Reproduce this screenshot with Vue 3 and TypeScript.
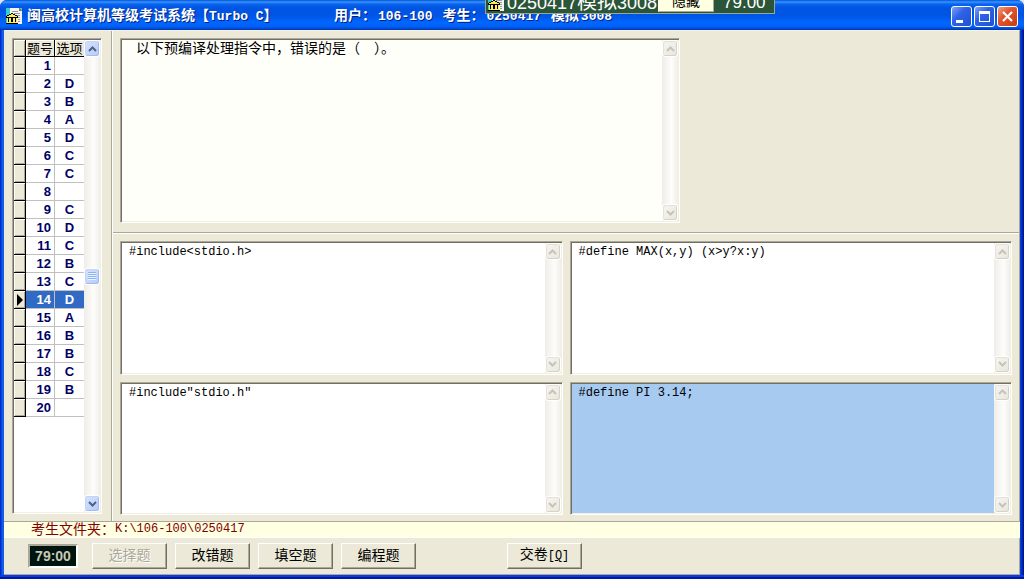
<script setup lang="ts">
import { ref } from 'vue'

interface Row { no: number; choice: string }

const choices = ['', 'D', 'B', 'A', 'D', 'C', 'C', '', 'C', 'D', 'C', 'B', 'C', 'D', 'A', 'B', 'B', 'C', 'B', '']
const rows = ref<Row[]>(choices.map((choice, i) => ({ no: i + 1, choice })))
const current = ref(14)

const question = '以下预编译处理指令中，错误的是（　）。'
const options = [
  { key: 'A', text: '#include<stdio.h>' },
  { key: 'B', text: '#define MAX(x,y) (x>y?x:y)' },
  { key: 'C', text: '#include"stdio.h"' },
  { key: 'D', text: '#define PI 3.14;' },
]
const sections = [
  { label: '选择题', disabled: true },
  { label: '改错题', disabled: false },
  { label: '填空题', disabled: false },
  { label: '编程题', disabled: false },
]
</script>

<template>
  <div class="window">
    <header class="titlebar">
      <svg class="app-icon" width="16" height="16" viewBox="0 0 16 16" shape-rendering="crispEdges">
        <rect width="16" height="16" fill="#30d0d0" />
        <path d="M4 0h9l3 3v13H4z" fill="#f4f4f4" />
        <path d="M13 0v3h3v-1h-1v-1h-1v-1z" fill="#777" />
        <path d="M6 3h6v1H6zM8 5h6v1H8zM10 7h4v1h-4zM12 9h2v1h-2zM12 11h2v1h-2zM12 13h2v1h-2z" fill="#999" />
        <path d="M5 5h2v1h2v1h2v1h1v2H0V8h1V7h2V6h2z" fill="#000" />
        <path d="M5 6h2v1h2v1h2v1H1V8h2V7h2z" fill="#fff050" />
        <path d="M1 10h10v5H1z" fill="#fff050" />
        <path d="M2 10h1v4H2zM5 10h2v4H5zM9 10h1v4H9zM0 15h12v1H0z" fill="#000" />
      </svg>
      <h1 class="title">
        <span>闽高校计算机等级考试系统【</span><span class="mono">Turbo C</span><span>】</span>
      </h1>
      <p class="user">
        <span>用户：</span><span class="mono">106-100&nbsp;</span><span>考生：</span><span class="mono">0250417&nbsp;</span><span>模拟</span><span class="mono">3008</span>
      </p>
      <div class="window-buttons">
        <button type="button" aria-label="最小化">
          <svg width="19" height="19" viewBox="0 0 19 19"><path d="M4 13h7v3H4z" fill="#fff" /></svg>
        </button>
        <button type="button" aria-label="最大化">
          <svg width="19" height="19" viewBox="0 0 19 19" shape-rendering="crispEdges"><path d="M4 4h11v11H4zM5 7v7h9V7z" fill="#fff" fill-rule="evenodd" /></svg>
        </button>
        <button type="button" class="close" aria-label="关闭">
          <svg width="19" height="19" viewBox="0 0 19 19"><path d="M5 5l9 9M14 5l-9 9" stroke="#fff" stroke-width="2.200" /></svg>
        </button>
      </div>
    </header>

    <main class="body">
      <aside class="side">
        <div class="sunken list">
          <div class="list-view">
            <table>
              <thead>
                <tr><th class="mark"></th><th>题号</th><th>选项</th></tr>
              </thead>
              <tbody>
                <tr v-for="r in rows" :key="r.no" :class="{ selected: r.no === current }" @click="current = r.no">
                  <td class="mark">
                    <svg v-if="r.no === current" width="6" height="12" viewBox="0 0 6 12"><path d="M0 0l6 6-6 6z" fill="#000" /></svg>
                  </td>
                  <td class="no">{{ r.no }}</td>
                  <td class="choice">{{ r.choice }}</td>
                </tr>
              </tbody>
            </table>
          </div>
          <div class="scrollbar active">
            <button type="button" aria-label="向上"><svg width="9" height="6" viewBox="0 0 9 6"><path d="M1 5l3.500-3.500L8 5" /></svg></button>
            <span class="thumb"></span>
            <button type="button" aria-label="向下"><svg width="9" height="6" viewBox="0 0 9 6"><path d="M1 1l3.500 3.500L8 1" /></svg></button>
          </div>
        </div>
      </aside>

      <div class="work">
        <section class="question">
          <div class="sunken memo ivory">
            <textarea class="prompt" readonly aria-label="题目" :value="question"></textarea>
            <div class="scrollbar">
              <button type="button" disabled aria-label="向上"><svg width="9" height="6" viewBox="0 0 9 6"><path d="M1 5l3.500-3.500L8 5" /></svg></button>
              <button type="button" disabled aria-label="向下"><svg width="9" height="6" viewBox="0 0 9 6"><path d="M1 1l3.500 3.500L8 1" /></svg></button>
            </div>
          </div>
        </section>
        <section class="answers">
          <div v-for="o in options" :key="o.key" class="sunken memo" :class="{ chosen: o.key === 'D' }">
            <textarea readonly :aria-label="'选项' + o.key" :value="o.text"></textarea>
            <div class="scrollbar">
              <button type="button" disabled aria-label="向上"><svg width="9" height="6" viewBox="0 0 9 6"><path d="M1 5l3.500-3.500L8 5" /></svg></button>
              <button type="button" disabled aria-label="向下"><svg width="9" height="6" viewBox="0 0 9 6"><path d="M1 1l3.500 3.500L8 1" /></svg></button>
            </div>
          </div>
        </section>
      </div>
    </main>

    <div class="path"><span>考生文件夹：</span><span class="mono">K:\106-100\0250417</span></div>

    <footer class="toolbar">
      <output class="timer">79:00</output>
      <button v-for="s in sections" :key="s.label" type="button" class="push" :disabled="s.disabled">{{ s.label }}</button>
      <button type="button" class="push submit">交卷<span class="mono">[<u>Q</u>]</span></button>
    </footer>

    <div class="float-bar">
      <svg class="float-icon" width="16" height="12" viewBox="0 4 16 12" shape-rendering="crispEdges">
        <rect y="4" width="16" height="12" fill="#30d0d0" />
        <path d="M4 4h12v12H4z" fill="#f4f4f4" />
        <path d="M8 5h6v1H8zM10 7h4v1h-4zM12 9h2v1h-2zM12 11h2v1h-2zM12 13h2v1h-2z" fill="#999" />
        <path d="M5 5h2v1h2v1h2v1h1v2H0V8h1V7h2V6h2z" fill="#000" />
        <path d="M5 6h2v1h2v1h2v1H1V8h2V7h2z" fill="#fff050" />
        <path d="M1 10h10v5H1z" fill="#fff050" />
        <path d="M2 10h1v4H2zM5 10h2v4H5zM9 10h1v4H9zM0 15h12v1H0z" fill="#000" />
      </svg>
      <span class="float-name">0250417<span class="han">模拟</span>3008</span>
      <button type="button">隐藏</button>
      <span class="float-time">79.00</span>
    </div>
  </div>
</template>

<style>
html,
body {
  margin: 0;
  background: #dfe6f4;
}
</style>

<style scoped>
* {
  box-sizing: border-box;
}

.window {
  position: relative;
  display: flex;
  flex-direction: column;
  min-height: 100vh;
  padding: 0 4px 4px;
  overflow: hidden;
  border-radius: 7px 7px 0 0;
  background: linear-gradient(90deg, #0019cf 0, #0855dd 2px, #166aee 3px, #0855dd 4px, #0855dd 50%, #0048d8 calc(100% - 4px), #003cd8 calc(100% - 3px), #0019a0 calc(100% - 1px), #00138c);
  box-shadow: inset 0 -2px #001a9c, inset 0 -4px #0c3ade;
  color: #000;
  font: 14px/16px "Liberation Sans", "Noto Sans CJK SC", sans-serif;
}

button {
  margin: 0;
  padding: 0;
  font: inherit;
}

.mono {
  font-family: "Liberation Mono", monospace;
  font-size: 12px;
}

.titlebar {
  display: flex;
  align-items: center;
  height: 30px;
  margin: 0 -4px;
  padding: 3px 6px 0;
  border-bottom: 1px solid #0138b8;
  background: linear-gradient(#0054d8 0, #3a93ff 2px, #0a66ee 4px, #0054e3 8px, #0055e5 16px, #0066ff 22px, #0064fb 26px, #0048cf 29px);
  color: #fff;
  font-weight: bold;
  text-shadow: 1px 1px #00207c;
}

.app-icon {
  flex: none;
}

.title,
.user {
  display: flex;
  align-items: baseline;
  flex: none;
  margin: 0;
  font-size: 14px;
  line-height: 20px;
  white-space: nowrap;
}

.title {
  width: 307px;
  margin-left: 5px;
}

.user {
  gap: 2px;
}

.titlebar .mono {
  font-size: 13px;
}

.window-buttons {
  display: flex;
  gap: 2px;
  margin-left: auto;
}

.window-buttons button {
  width: 21px;
  height: 21px;
  border: 1px solid #fff;
  border-radius: 3px;
  background: linear-gradient(135deg, #7fa2f6, #2e63e8 40%, #2050d0);
}

.window-buttons svg {
  display: block;
}

.window-buttons .close {
  background: linear-gradient(135deg, #f0a088, #e2552c 40%, #c83c10);
}

.body {
  display: flex;
  flex: 1;
  border-top: 1px solid #f6f4ea;
  border-right: 1px solid #aca899;
  background: #ece9d8;
}

.side {
  display: flex;
  flex: none;
  padding: 7px 9px 7px 8px;
  border-right: 1px solid #aca899;
}

.sunken {
  display: flex;
  border: 1px solid;
  border-color: #aca899 #fff #fff #aca899;
  background: #fff;
  box-shadow: inset 1px 1px #716f64, inset -1px -1px #f1efe2;
  padding: 1px;
}

.list-view {
  width: 70px;
}

table {
  width: 100%;
  border-collapse: separate;
  border-spacing: 0;
  table-layout: fixed;
}

th,
td {
  height: 18px;
  padding: 0;
  border-right: 1px solid #c0c0c0;
  border-bottom: 1px solid #c0c0c0;
  line-height: 16px;
}

th {
  height: 17px;
  border-color: #000;
  background: #ece9d8;
  font-size: 13px;
  font-weight: normal;
  line-height: 15px;
  box-shadow: inset 1px 1px #fff;
}

th:last-child,
td:last-child {
  border-right: 0;
}

.mark {
  width: 12px;
  border-color: #000;
  background: #ece9d8;
  box-shadow: inset 1px 1px #fff, inset -1px -1px #aca899;
}

.mark svg {
  display: block;
  margin: auto;
}

.no,
.choice {
  color: #000066;
  font-size: 13px;
  font-weight: bold;
}

.no {
  padding-right: 3px;
  text-align: right;
}

.choice {
  text-align: center;
}

.selected .no,
.selected .choice {
  background: #316ac5;
  color: #fff;
}

.scrollbar {
  display: flex;
  flex: none;
  flex-direction: column;
  justify-content: space-between;
  width: 16px;
  background: linear-gradient(90deg, #efede8, #fdfdfb 60%, #f0eee8);
}

.scrollbar button,
.thumb {
  display: flex;
  align-items: center;
  justify-content: center;
  width: 16px;
  height: 17px;
  border: 1px solid #fff;
  border-radius: 3px;
  background: linear-gradient(135deg, #f6f5f0, #e9e7dc);
  box-shadow: inset -1px -1px #d5d3c8, inset 1px 1px #e4e2d8;
}

.scrollbar path {
  fill: none;
  stroke: #c6c4ba;
  stroke-width: 2;
}

.active button,
.thumb {
  background: linear-gradient(135deg, #d6e2fe, #b8cbf8);
  box-shadow: inset -1px -1px #a4bbee, inset 1px 1px #c4d4fb;
}

.active path {
  stroke: #4d6185;
}

.thumb::before {
  width: 8px;
  height: 8px;
  background: repeating-linear-gradient(#8cb0f8 0 1px, #eef4fe 1px 2px);
  content: "";
}

.work {
  display: flex;
  flex: 1;
  flex-direction: column;
  min-width: 0;
  border-left: 1px solid #fff;
}

.question {
  display: flex;
  height: 202px;
  padding: 7px 7px 9px;
  border-bottom: 1px solid #aca899;
}

.question .memo {
  width: 560px;
}

.answers {
  display: grid;
  flex: 1;
  grid-template-columns: 1fr 1fr;
  grid-template-rows: 1fr 1fr;
  gap: 7px;
  padding: 7px 7px 6px;
  border-top: 1px solid #fff;
}

.memo {
  min-width: 0;
}

.memo textarea {
  flex: 1;
  min-width: 0;
  margin: 0;
  padding: 1px 7px;
  overflow: hidden;
  border: 0;
  outline: 0;
  resize: none;
  background: transparent;
  color: #000;
  font: 12px/16px "Liberation Mono", monospace;
}

.memo .prompt {
  padding: 0 14px;
  font: 14px/14px "Noto Sans CJK SC", sans-serif;
}

.ivory {
  background: #fffffa;
}

.chosen {
  background: #a6caf0;
}

.chosen .scrollbar {
  background-color: #fff;
}

.path {
  display: flex;
  align-items: center;
  height: 17px;
  padding: 0 0 1px 27px;
  border-top: 1px solid #aca899;
  border-bottom: 1px solid #fff;
  background: #ffffe1;
  color: #800000;
}

.toolbar {
  display: flex;
  align-items: flex-start;
  gap: 8px;
  height: 37px;
  padding: 5px 24px;
  border-right: 1px solid #aca899;
  border-bottom: 1px solid #aca899;
  background: #ece9d8;
}

.timer {
  width: 50px;
  height: 24px;
  margin: 1px 6px 0 0;
  border: 2px solid;
  border-color: #aca899 #fff #fff #aca899;
  background: #001410;
  color: #c8c8b4;
  font-size: 14px;
  font-weight: bold;
  line-height: 20px;
  text-align: center;
}

.push {
  width: 75px;
  height: 26px;
  padding-bottom: 2px;
  border: 1px solid;
  border-color: #fff #716f64 #716f64 #fff;
  background: #ece9d8;
  box-shadow: inset -1px -1px #aca899;
  color: #000;
  line-height: 20px;
}

.push:disabled {
  color: #aca899;
  text-shadow: 1px 1px #fff;
}

.submit {
  margin-left: 83px;
}

.float-bar {
  position: absolute;
  top: 0;
  left: 485px;
  display: flex;
  align-items: flex-end;
  width: 290px;
  height: 14px;
  overflow: hidden;
  border: 1px solid #93aa98;
  border-top: 0;
  background: #2b5538;
  color: #fff;
}

.float-icon {
  flex: none;
  margin: 0 3px 2px 2px;
}

.float-name {
  display: flex;
  align-items: baseline;
  width: 151px;
  font-size: 18px;
  line-height: 20px;
  white-space: nowrap;
}

.float-name .han {
  font-size: 20px;
}

.float-bar button {
  flex: none;
  width: 56px;
  height: 22px;
  margin-bottom: 1px;
  border: 1px solid #fff;
  border-color: #fff #aca899 #aca899 #fff;
  background: #ffffe1;
  color: #000;
  line-height: 20px;
}

.float-time {
  margin-left: 9px;
  font-size: 17px;
  line-height: 20px;
}
</style>
